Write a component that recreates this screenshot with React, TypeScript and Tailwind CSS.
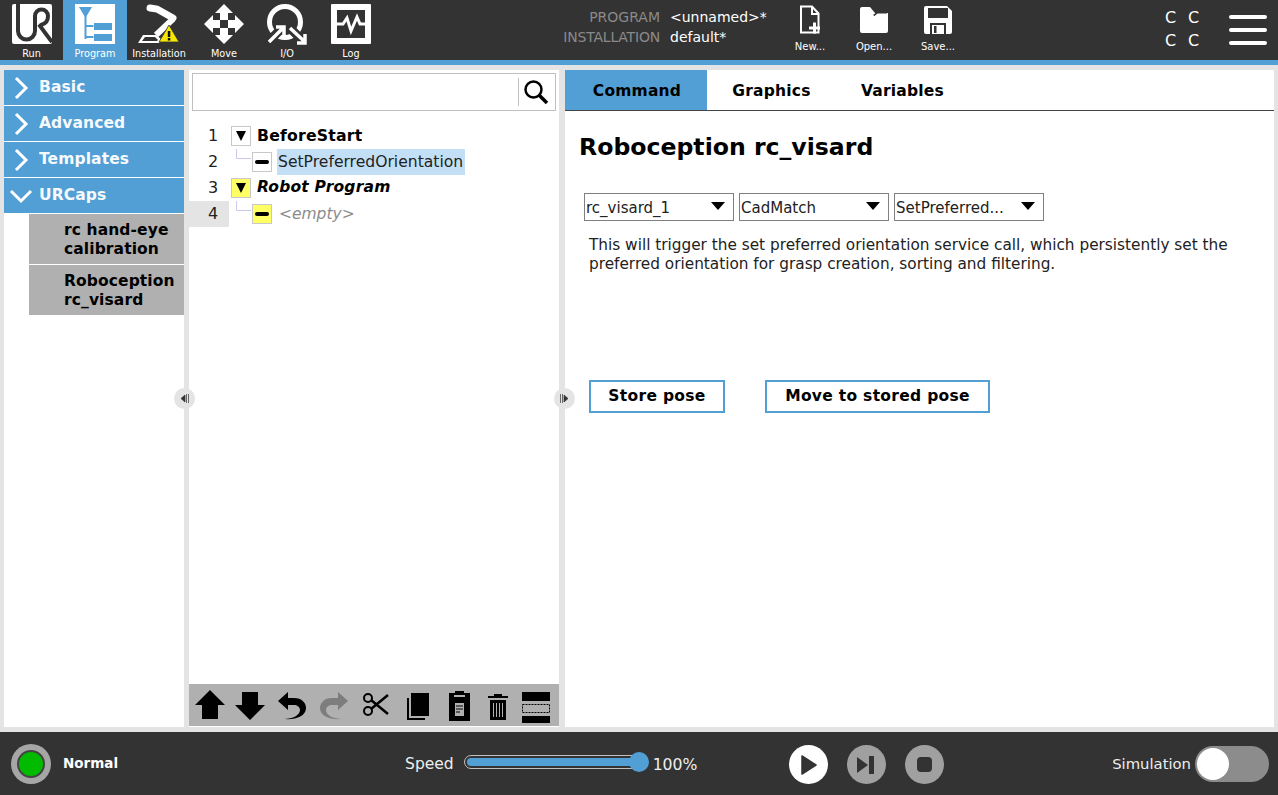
import { ReactNode } from "react";

const UrLogo = () => (
  <svg width="40" height="40" viewBox="0 0 40 40">
    <rect width="40" height="40" rx="2" fill="#fff" />
    <path
      d="M6 0V27a8.500 8.500 0 0 0 17 0V12a6.500 6.500 0 0 1 13 0c0 5-3 8-7 9l-1 1 12 16"
      fill="none"
      stroke="#333"
      strokeWidth="4"
    />
  </svg>
);

const ProgramIcon = () => (
  <svg width="40" height="40" viewBox="0 0 40 40">
    <rect width="40" height="40" fill="#fff" />
    <path d="M4 3h13l-6.500 11z" fill="#529fd6" />
    <path d="M10.500 12v23M10.500 22h8M10.500 33h8" stroke="#529fd6" strokeWidth="2" fill="none" />
    <rect x="19" y="19" width="18" height="7" fill="#529fd6" />
    <rect x="19" y="30" width="18" height="7" fill="#529fd6" />
  </svg>
);

const InstallIcon = () => (
  <svg width="42" height="42" viewBox="0 0 42 42">
    <path d="M12 4l7 1 16 9" fill="none" stroke="#fff" strokeWidth="7" strokeLinecap="round" />
    <path d="M35 15L18 31" fill="none" stroke="#fff" strokeWidth="6" />
    <path d="M0 39l5-8h13l5 4-2 4z" fill="#fff" />
    <path d="M4 37l3-4h10l3 3-1 1z" fill="#333" />
    <path d="M31 21l10 17H21z" fill="#f7e600" stroke="#333" strokeWidth="0.800" />
    <rect x="29.800" y="27" width="2.500" height="6" fill="#111" />
    <rect x="29.800" y="34" width="2.500" height="2.500" fill="#111" />
  </svg>
);

const MoveIcon = () => (
  <svg width="40" height="40" viewBox="0 0 40 40">
    <path
      d="M20 0l9 9h-5v7h-8V9h-5zM20 40l9-9h-5v-7h-8v7h-5zM0 20l9-9v5h7v8H9v5zM40 20l-9-9v5h-7v8h7v5z"
      fill="#fff"
    />
  </svg>
);

const IoIcon = () => (
  <svg width="42" height="42" viewBox="0 0 42 42">
    <circle cx="19" cy="18" r="15.500" fill="none" stroke="#fff" strokeWidth="5" />
    <path d="M2 38l15-15M24 24l15 15" fill="none" stroke="#333" strokeWidth="9" />
    <path d="M3 38l14-14M10 23h8v8" fill="none" stroke="#fff" strokeWidth="3.500" />
    <path d="M24 24l15 14M39 30v9h-8" fill="none" stroke="#fff" strokeWidth="3.500" />
  </svg>
);

const LogIcon = () => (
  <svg width="40" height="40" viewBox="0 0 40 40">
    <rect width="40" height="40" rx="1" fill="#fff" />
    <rect x="6" y="6" width="28" height="28" fill="#333" />
    <path d="M6 20h6l4-6 4 13 6-14 3 7h5" fill="none" stroke="#fff" strokeWidth="3" />
  </svg>
);

const FileIcons = {
  new: (
    <svg width="22" height="30" viewBox="0 0 22 30">
      <path d="M2 1.500h11l6.500 7v19H2z" fill="none" stroke="#fff" strokeWidth="2" />
      <path d="M13 1v8h7" fill="none" stroke="#fff" strokeWidth="2" />
      <path d="M10 23h11M15.500 17.500v11" stroke="#fff" strokeWidth="3" />
    </svg>
  ),
  open: (
    <svg width="30" height="30" viewBox="0 0 30 30">
      <path d="M1 6a2 2 0 0 1 2-2h8l5 6h13V28a2 2 0 0 1-2 2H3a2 2 0 0 1-2-2z" fill="#fff" transform="translate(0 -2)" />
      <path d="M14 10l4-3h10v1.500H18.500l-3 2.500z" fill="#333" />
    </svg>
  ),
  save: (
    <svg width="30" height="30" viewBox="0 0 30 30">
      <path d="M3 1h21l5 5v21a2 2 0 0 1-2 2H3a2 2 0 0 1-2-2V3a2 2 0 0 1 2-2z" fill="#fff" />
      <rect x="5" y="3" width="20" height="10" fill="#333" />
      <rect x="7" y="18" width="16" height="11" fill="#333" />
      <rect x="9" y="20" width="12" height="9" fill="#fff" />
      <rect x="11" y="21" width="2.500" height="7" fill="#333" />
    </svg>
  ),
};

const Tab = ({ label, active, icon, width }: { label: string; active?: boolean; icon: ReactNode; width: string }) => (
  <div className={`${width} shrink-0 h-full flex flex-col items-center ${active ? "bg-[#529fd6]" : ""}`}>
    <div className="h-[49px] pt-1 flex justify-center">{icon}</div>
    <span className="text-[9.700px] leading-[12px] text-white whitespace-nowrap">{label}</span>
  </div>
);

const FileButton = ({ label, icon }: { label: string; icon: ReactNode }) => (
  <div className="w-16 flex flex-col items-center">
    <div className="h-[41px] pt-[5px] flex justify-center">{icon}</div>
    <span className="text-[10px] leading-[12px] text-white">{label}</span>
  </div>
);

const Chevron = ({ open }: { open?: boolean }) => (
  <svg width="24" height="24" viewBox="0 0 24 24" className="shrink-0">
    <path d={open ? "M2 7l10 10L22 7" : "M7 2l10 10L7 22"} fill="none" stroke="#fff" strokeWidth="3" />
  </svg>
);

const Category = ({ label, open }: { label: string; open?: boolean }) => (
  <div className="h-[35px] bg-[#529fd6] flex items-center pl-[5px] gap-[6px]">
    <Chevron open={open} />
    <span className="text-white font-bold text-[15.500px] leading-[33px] tracking-[0.1px] opacity-95">{label}</span>
  </div>
);

const SubItem = ({ lines }: { lines: [string, string] }) => (
  <div className="ml-[25px] h-[50px] bg-[#b0b0b0] pl-[35px] pt-[2px] flex flex-col justify-center text-[15.500px] leading-[19px] font-bold text-black tracking-[0.1px]">
    <span>{lines[0]}</span>
    <span>{lines[1]}</span>
  </div>
);

const NodeBox = ({ kind, yellow }: { kind: "down" | "dash"; yellow?: boolean }) => (
  <div
    className={`w-5 h-5 shrink-0 border border-[#c8c8c8] flex items-center justify-center ${yellow ? "bg-[#ffff66]" : "bg-white"}`}
  >
    {kind === "down" ? (
      <svg width="12" height="10" viewBox="0 0 12 10">
        <path d="M1 0h10L6 10z" fill="#000" />
      </svg>
    ) : (
      <div className="w-[14px] h-1 bg-black rounded-sm" />
    )}
  </div>
);

const Connector = () => (
  <svg width="15" height="14" viewBox="0 0 15 14" className="shrink-0 -mt-[12px]">
    <path d="M0.500 0v9.500H15" fill="none" stroke="#c9c9ef" />
  </svg>
);

const TreeRow = ({ n, active, children }: { n: number; active?: boolean; children: ReactNode }) => (
  <div className="h-[26px] flex items-center">
    <div className={`w-10 h-[26px] flex items-center pl-[19px] text-[16px] text-[#222] shrink-0 ${active ? "bg-[#e4e4e4]" : ""}`}>
      {n}
    </div>
    <div className="pl-[2px] flex items-center">{children}</div>
  </div>
);

const Toolbar = () => (
  <div className="h-[42px] mb-px bg-[#b0b0b0] flex items-center shrink-0">
    <svg width="370" height="42" viewBox="0 0 370 42">
      <path d="M21 6l15 15h-7v14H13V21H6z" fill="#000" />
      <path d="M61 36l15-15h-7V8H53v13h-7z" fill="#000" />
      <path d="M89 17l10-9v6h6c8 0 12 5 12 10 0 8-10 12-22 11 9 0 16-4 16-9 0-3-3-5-6-5h-6v5z" fill="#000" />
      <path d="M159 17l-10-9v6h-6c-8 0-12 5-12 10 0 8 10 12 22 11-9 0-16-4-16-9 0-3 3-5 6-5h6v5z" fill="#7d7d7d" />
      <circle cx="179" cy="14" r="4" fill="none" stroke="#000" strokeWidth="2" />
      <circle cx="179" cy="27" r="4" fill="none" stroke="#000" strokeWidth="2" />
      <path d="M182 16l17 14M182 25l17-14" stroke="#000" strokeWidth="2.500" />
      <rect x="222" y="9" width="18" height="23" fill="#000" />
      <path d="M219 14v21h17" fill="none" stroke="#000" strokeWidth="2" />
      <path d="M260 9h6v-2h9v2h6v28h-21z" fill="#000" />
      <rect x="265" y="11" width="11" height="2" fill="#b0b0b0" />
      <rect x="266" y="19" width="9" height="13" fill="#b0b0b0" />
      <path d="M267 22h7M267 25h7M267 28h4" stroke="#000" />
      <path d="M299 12h20v2h-20zM305 12v-2h8v2z" fill="#000" />
      <path d="M301 16h16v20h-16z" fill="#000" />
      <path d="M304.500 19v14M307.500 19v14M310.500 19v14M313.500 19v14" stroke="#b0b0b0" />
      <rect x="333" y="8" width="28" height="9" fill="#000" />
      <rect x="333.500" y="20.500" width="27" height="8" fill="none" stroke="#000" strokeDasharray="2 1" />
      <rect x="333" y="32" width="28" height="7" fill="#000" />
    </svg>
  </div>
);

const Select = ({ value }: { value: string }) => (
  <div className="w-[150px] h-[28px] border border-[#808080] bg-white flex items-center justify-between pl-[1px] pr-[8px] text-[15px] leading-[28px] text-[#222]">
    <span className="mt-px">{value}</span>
    <svg width="14" height="8" viewBox="0 0 14 8" className="-mt-[2px]">
      <path d="M0 0h14L7 8z" fill="#000" />
    </svg>
  </div>
);

const OutlineButton = ({ label, w }: { label: string; w: string }) => (
  <div className={`${w} h-[33px] border-2 border-[#529fd6] flex items-center justify-center text-[15.500px] font-bold text-black tracking-[0.3px]`}>
    {label}
  </div>
);

const RoundButton = ({ white, children }: { white?: boolean; children: ReactNode }) => (
  <div className={`w-[39px] h-[39px] rounded-full flex items-center justify-center ${white ? "bg-white" : "bg-[#a0a0a0]"}`}>
    {children}
  </div>
);

const Handle = ({ className, right }: { className: string; right?: boolean }) => (
  <div className={`absolute top-[388px] w-[21px] h-[21px] rounded-full bg-[#e4e4e4] flex items-center justify-center ${className}`}>
    <svg width="9" height="9" viewBox="0 0 9 9">
      {right ? (
        <path d="M0.500 0v9M2.500 0v9M4 1l4 3.500L4 8z" fill="#333" stroke="#333" strokeWidth="0.700" />
      ) : (
        <path d="M8.500 0v9M6.500 0v9M5 1L1 4.500 5 8z" fill="#333" stroke="#333" strokeWidth="0.700" />
      )}
    </svg>
  </div>
);

export default function App() {
  return (
    <div className="relative w-[1278px] h-[795px] overflow-hidden flex flex-col bg-[#e4e4e4] font-['DejaVu_Sans',sans-serif]">
      {/* top bar */}
      <header className="h-[65px] shrink-0 bg-[#333333] border-b-[5px] border-[#529fd6] flex">
        <div className="w-[383px] shrink-0 flex">
          <Tab label="Run" width="w-[63px]" icon={<UrLogo />} />
          <Tab label="Program" width="w-16" active icon={<ProgramIcon />} />
          <Tab label="Installation" width="w-16" icon={<InstallIcon />} />
          <Tab label="Move" width="w-[66px]" icon={<MoveIcon />} />
          <Tab label="I/O" width="w-[60px]" icon={<IoIcon />} />
          <Tab label="Log" width="w-[68px]" icon={<LogIcon />} />
        </div>
        <div className="w-[385px] shrink-0 pt-[7px] flex flex-col text-[14px] leading-5">
          <div className="flex gap-[10px]">
            <span className="w-[277px] text-right text-[#8a8a8a]">PROGRAM</span>
            <span className="text-white">&lt;unnamed&gt;*</span>
          </div>
          <div className="flex gap-[10px]">
            <span className="w-[277px] text-right text-[#8a8a8a] tracking-[-0.2px]">INSTALLATION</span>
            <span className="text-white">default*</span>
          </div>
        </div>
        <div className="flex ml-[10px]">
          <FileButton label="New..." icon={FileIcons.new} />
          <FileButton label="Open..." icon={FileIcons.open} />
          <FileButton label="Save..." icon={FileIcons.save} />
        </div>
        <div className="ml-[195px] pt-[6px] w-[46px] grid grid-cols-2 content-start text-[16px] leading-[23px] text-white">
          <span>C</span>
          <span>C</span>
          <span>C</span>
          <span>C</span>
        </div>
        <div className="ml-[18px] pt-[15px] w-[38px] flex flex-col gap-[9px]">
          <div className="h-[4px] bg-white rounded-sm" />
          <div className="h-[4px] bg-white rounded-sm" />
          <div className="h-[4px] bg-white rounded-sm" />
        </div>
      </header>

      {/* main panels */}
      <main className="h-[667px] shrink-0 flex pt-[5px] pb-[5px] pl-[4px] pr-[4px]">
        <aside className="w-[180px] bg-white flex flex-col gap-px">
          <Category label="Basic" />
          <Category label="Advanced" />
          <Category label="Templates" />
          <Category label="URCaps" open />
          <SubItem lines={["rc hand-eye", "calibration"]} />
          <SubItem lines={["Roboception", "rc_visard"]} />
        </aside>

        <section className="ml-[5px] w-[370px] bg-white flex flex-col">
          <div className="mt-[3px] mx-[3px] h-[38px] border border-[#c0c0c0] flex justify-end items-center shrink-0">
            <div className="w-[37px] h-7 border-l border-[#c0c0c0] flex items-center justify-center -ml-px">
              <svg width="26" height="26" viewBox="0 0 26 26" className="-ml-[2px]">
                <circle cx="10.500" cy="10.500" r="8" fill="none" stroke="#000" strokeWidth="2.500" />
                <path d="M16 16l8 8" stroke="#000" strokeWidth="3.500" />
              </svg>
            </div>
          </div>
          <div className="flex-1 pt-[12px]">
            <TreeRow n={1}>
              <NodeBox kind="down" />
              <span className="ml-[6px] text-[15.700px] font-bold text-black tracking-[0.2px]">BeforeStart</span>
            </TreeRow>
            <TreeRow n={2}>
              <div className="w-[21px] flex justify-end pr-[1px]">
                <Connector />
              </div>
              <NodeBox kind="dash" />
              <span className="ml-[5px] pl-[1px] pr-[2px] h-[26px] bg-[#c2dff5] text-[15.600px] leading-[26px] text-[#222]">SetPreferredOrientation</span>
            </TreeRow>
            <TreeRow n={3}>
              <NodeBox kind="down" yellow />
              <span className="ml-[6px] text-[15.500px] font-bold italic text-black tracking-[0.2px]">Robot Program</span>
            </TreeRow>
            <TreeRow n={4} active>
              <div className="w-[21px] flex justify-end pr-[1px]">
                <Connector />
              </div>
              <NodeBox kind="dash" yellow />
              <span className="ml-[7px] mt-[2px] text-[15.500px] italic text-[#8c8c8c]">&lt;empty&gt;</span>
            </TreeRow>
          </div>
          <Toolbar />
        </section>

        <section className="ml-[6px] flex-1 bg-white flex flex-col">
          <div className="h-[41px] shrink-0 flex border-b border-[#444] text-[15.500px] font-bold text-black tracking-[0.2px]">
            <div className="w-[142px] h-[40px] bg-[#529fd6] flex items-center justify-center pt-[4px] pl-[2px]">Command</div>
            <div className="w-[129px] flex items-center justify-center pt-[4px]">Graphics</div>
            <div className="w-[133px] flex items-center justify-center pt-[4px]">Variables</div>
          </div>
          <h1 className="mt-[20px] ml-[14px] text-[23.600px] leading-8 font-bold text-black">Roboception rc_visard</h1>
          <div className="mt-[30px] ml-[19px] flex gap-[5px]">
            <Select value="rc_visard_1" />
            <Select value="CadMatch" />
            <Select value="SetPreferred..." />
          </div>
          <p className="mt-[15px] ml-[24px] text-[15.300px] leading-[19px] text-[#222] whitespace-nowrap">
            This will trigger the set preferred orientation service call, which persistently set the
            <br />
            preferred orientation for grasp creation, sorting and filtering.
          </p>
          <div className="mt-[106px] ml-[24px] flex gap-[40px]">
            <OutlineButton label="Store pose" w="w-[136px]" />
            <OutlineButton label="Move to stored pose" w="w-[225px]" />
          </div>
        </section>
      </main>

      <Handle className="left-[174px]" />
      <Handle className="left-[554px]" right />

      {/* bottom bar */}
      <footer className="flex-1 bg-[#333333] flex items-center relative">
        <div className="ml-[11px] w-10 h-10 rounded-full bg-[#a6a6a6] flex items-center justify-center">
          <div className="w-7 h-7 rounded-full bg-[#00bb00] border-2 border-[#444]" />
        </div>
        <span className="ml-3 text-[13.500px] font-bold text-white">Normal</span>
        <span className="ml-[287px] mt-[2px] text-[15.500px] text-[#eee]">Speed</span>
        <div className="ml-[10px] -mt-[4px] w-[180px] h-[14px] rounded-full border border-[#c0c0c0] flex items-center px-[2px] relative">
          <div className="w-full h-2 rounded-full bg-[#529fd6]" />
          <div className="absolute right-[-6px] -top-[4px] w-5 h-5 rounded-full bg-[#529fd6]" />
        </div>
        <span className="ml-[9px] mt-[2px] text-[15.700px] text-[#eee]">100%</span>
        <div className="ml-[91px] flex gap-[19px] mt-[2px]">
          <RoundButton white>
            <svg width="16" height="20" viewBox="0 0 16 20" className="ml-[2px]">
              <path d="M1 1l14 9-14 9z" fill="#333" stroke="#333" strokeWidth="1.500" strokeLinejoin="round" />
            </svg>
          </RoundButton>
          <RoundButton>
            <svg width="18" height="18" viewBox="0 0 18 18">
              <path d="M0 1l11 8-11 8z" fill="#333" />
              <rect x="12" y="0" width="5" height="18" fill="#333" />
            </svg>
          </RoundButton>
          <RoundButton>
            <div className="w-[15px] h-[15px] bg-[#333] rounded-sm" />
          </RoundButton>
        </div>
        <span className="ml-auto mr-1 mt-[2px] text-[14.800px] text-[#eee]">Simulation</span>
        <div className="mr-[9px] w-[74px] h-9 rounded-full bg-[#8c8c8c] flex items-center pl-[2px]">
          <div className="w-8 h-8 rounded-full bg-white" />
        </div>
      </footer>
    </div>
  );
}
